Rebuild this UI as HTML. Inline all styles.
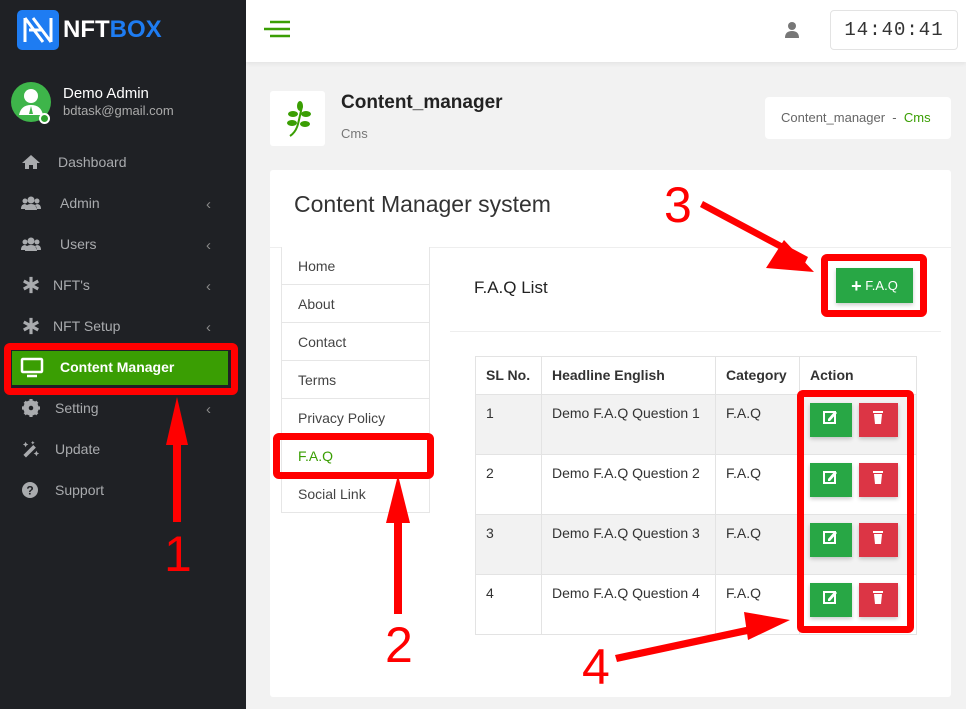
<!DOCTYPE html>
<html><head><meta charset="utf-8"><style>
*{box-sizing:border-box;margin:0;padding:0}
body{width:966px;height:709px;overflow:hidden;position:relative;background:#f2f2f2;font-family:"Liberation Sans",sans-serif;color:#333}
.a{position:absolute}
#sb{left:0;top:0;width:246px;height:709px;background:#1f2125}
.mi{position:absolute;left:0;width:246px;height:30px;color:#a9abae;font-size:14px}
.mi .ic{position:absolute;left:21px;top:7px;width:20px;height:16px}
.mi .t{position:absolute;left:58px;top:7px}
.mi .ch{position:absolute;left:206px;top:8px;font-size:15px;color:#888}
.nav{position:absolute;left:281px;width:149px;height:38px;border:1px solid #e6e6e6;border-top:none;background:#fff;font-size:14px;color:#444;padding:11px 0 0 16px}
td,th{border:1px solid #e3e3e3;text-align:left;vertical-align:top;font-size:14px;color:#333;padding:10px 10px}
th{font-weight:bold;height:38px}
td{height:60px}
.r{background:#f2f2f2}
.red{position:absolute;border:7px solid #f00;border-radius:6px}
.num{position:absolute;color:#f00;font-size:50px;font-family:"Liberation Sans",sans-serif}
.be,.bd{display:inline-block;width:42px;height:34px;margin:8px 0 0 0;vertical-align:top;box-shadow:0 2px 4px rgba(0,0,0,.2)}
.be{background:#28a745}.bd{background:#dc3545;width:39px;margin-left:7px}
</style></head><body>
<div id="sb" class="a">
 <div class="a" style="left:17px;top:10px;width:42px;height:40px;background:#1e7cf2;border-radius:5px"></div>
 <svg class="a" style="left:20px;top:14px" width="36" height="32"><path d="M5 4v24M5 4l18 24M13 4l18 24M31 4v24M9 16l14 0" stroke="#fff" stroke-width="3" fill="none"/></svg>
 <div class="a" style="left:63px;top:16px;font-size:24px;font-weight:bold;color:#fff">NFT<span style="color:#1e7cf2">BOX</span></div>
 <div class="a" style="left:11px;top:82px;width:40px;height:40px;border-radius:50%;background:#3eb54a"></div>
 <svg class="a" style="left:11px;top:82px" width="40" height="40"><circle cx="20" cy="14" r="7" fill="#fff"/><path d="M8 33q2-10 12-10q10 0 12 10z" fill="#fff"/><path d="M20 24l-2 8h4z" fill="#3eb54a"/></svg>
 <div class="a" style="left:39px;top:113px;width:11px;height:11px;border-radius:50%;background:#2ea12e;border:2px solid #fff"></div>
 <div class="a" style="left:63px;top:85px;color:#fff;font-size:15px">Demo Admin</div>
 <div class="a" style="left:63px;top:103px;color:#aaa;font-size:13px">bdtask@gmail.com</div>
 <div class="mi" style="top:147px"><svg class="ic" viewBox="0 0 20 16"><path d="M10 1L1 9h3v6h4v-4h4v4h4V9h3z" fill="#a9abae"/></svg><span class="t">Dashboard</span></div>
 <div class="mi" style="top:188px"><svg class="ic" viewBox="0 0 20 16"><circle cx="10" cy="5" r="3.5" fill="#a9abae"/><circle cx="4" cy="6" r="2.5" fill="#a9abae"/><circle cx="16" cy="6" r="2.5" fill="#a9abae"/><path d="M4 15q0-6 6-6t6 6zM0 14q0-5 4-5l2 1-2 4zM20 14q0-5-4-5l-2 1 2 4z" fill="#a9abae"/></svg><span class="t" style="left:60px">Admin</span><span class="ch">‹</span></div>
 <div class="mi" style="top:229px"><svg class="ic" viewBox="0 0 20 16"><circle cx="10" cy="5" r="3.5" fill="#a9abae"/><circle cx="4" cy="6" r="2.5" fill="#a9abae"/><circle cx="16" cy="6" r="2.5" fill="#a9abae"/><path d="M4 15q0-6 6-6t6 6zM0 14q0-5 4-5l2 1-2 4zM20 14q0-5-4-5l-2 1 2 4z" fill="#a9abae"/></svg><span class="t" style="left:60px">Users</span><span class="ch">‹</span></div>
 <div class="mi" style="top:270px"><svg class="ic" viewBox="0 0 20 20" style="height:18px;top:6px"><path d="M10 1v18M2 5.5l16 9M2 14.5l16-9" stroke="#a9abae" stroke-width="3.5"/></svg><span class="t" style="left:53px">NFT's</span><span class="ch">‹</span></div>
 <div class="mi" style="top:311px"><svg class="ic" viewBox="0 0 20 20" style="height:18px;top:6px"><path d="M10 1v18M2 5.5l16 9M2 14.5l16-9" stroke="#a9abae" stroke-width="3.5"/></svg><span class="t" style="left:53px">NFT Setup</span><span class="ch">‹</span></div>
 <div class="a" style="left:12px;top:351px;width:216px;height:34px;background:#3a9e03"></div>
 <svg class="a" style="left:20px;top:357px" width="24" height="22"><rect x="2" y="2" width="20" height="13" rx="1" stroke="#fff" stroke-width="2.5" fill="none"/><path d="M7 19h10" stroke="#fff" stroke-width="2.5"/></svg>
 <div class="a" style="left:60px;top:359px;color:#fff;font-size:14px;font-weight:bold">Content Manager</div>
 <div class="mi" style="top:393px"><svg class="ic" viewBox="0 0 20 20" style="height:18px;top:6px"><circle cx="10" cy="10" r="6.5" fill="none" stroke="#a9abae" stroke-width="4"/><path d="M10 0v20M0 10h20M3 3l14 14M17 3L3 17" stroke="#a9abae" stroke-width="3.5"/><circle cx="10" cy="10" r="2.5" fill="#1f2125"/></svg><span class="t" style="left:55px">Setting</span><span class="ch">‹</span></div>
 <div class="mi" style="top:434px"><svg class="ic" viewBox="0 0 20 20" style="height:18px;top:6px"><path d="M3 18L14 7" stroke="#a9abae" stroke-width="4"/><path d="M4 2l1 2 2 1-2 1-1 2-1-2-2-1 2-1zM16 12l1 2 2 1-2 1-1 2-1-2-2-1 2-1zM12 1l.7 1.3 1.3.7-1.3.7L12 5l-.7-1.3L10 3l1.3-.7z" fill="#a9abae"/></svg><span class="t" style="left:55px">Update</span></div>
 <div class="mi" style="top:475px"><svg class="ic" viewBox="0 0 20 16"><circle cx="9" cy="8" r="8" fill="#a9abae"/><text x="9" y="12.5" font-size="12" font-weight="bold" fill="#1f2125" text-anchor="middle" font-family="Liberation Sans">?</text></svg><span class="t" style="left:55px">Support</span></div>
</div>
<div class="a" style="left:246px;top:0;width:720px;height:62px;background:#fff;box-shadow:0 2px 4px rgba(0,0,0,.06)"></div>
<svg class="a" style="left:262px;top:20px" width="30" height="20"><path d="M8 2h20M2 9h26M8 16h20" stroke="#3a9e03" stroke-width="2.5"/></svg>
<svg class="a" style="left:784px;top:21px" width="16" height="18"><circle cx="8" cy="5" r="4" fill="#777"/><path d="M1 17q0-7 7-7t7 7z" fill="#777"/></svg>
<div class="a" style="left:830px;top:10px;width:128px;height:40px;border:1px solid #e3e3e3;border-radius:4px;font-family:'Liberation Mono',monospace;font-size:19px;color:#333;text-align:center;line-height:38px;letter-spacing:1px">14:40:41</div>
<div class="a" style="left:270px;top:91px;width:55px;height:55px;background:#fff;border-radius:3px"></div>
<svg class="a" style="left:282px;top:100px" width="32" height="38"><path d="M8 36q6-4 8-12q2-8 4-18" stroke="#3a9e03" stroke-width="2" fill="none"/><ellipse cx="18" cy="6" rx="3" ry="5" fill="#3a9e03"/><ellipse cx="11" cy="14" rx="5" ry="3" fill="#3a9e03"/><ellipse cx="24" cy="14" rx="5" ry="3" fill="#3a9e03"/><ellipse cx="10" cy="23" rx="5" ry="3" fill="#3a9e03"/><ellipse cx="23" cy="24" rx="5" ry="3" fill="#3a9e03"/></svg>
<div class="a" style="left:341px;top:92px;font-size:19px;font-weight:bold;color:#222">Content_manager</div>
<div class="a" style="left:341px;top:126px;font-size:13px;color:#777">Cms</div>
<div class="a" style="left:765px;top:97px;width:186px;height:42px;background:#fff;border-radius:4px;font-size:13px;color:#666;padding:13px 0 0 16px">Content_manager &nbsp;- &nbsp;<span style="color:#3a9e03">Cms</span></div>
<div class="a" style="left:270px;top:170px;width:681px;height:527px;background:#fff;border-radius:3px"></div>
<div class="a" style="left:294px;top:191px;font-size:23px;color:#333">Content Manager system</div>
<div class="a" style="left:270px;top:247px;width:681px;height:1px;background:#eee"></div>
<div class="nav" style="top:247px">Home</div>
<div class="nav" style="top:285px">About</div>
<div class="nav" style="top:323px">Contact</div>
<div class="nav" style="top:361px">Terms</div>
<div class="nav" style="top:399px">Privacy Policy</div>
<div class="nav" style="top:437px;color:#3a9e03">F.A.Q</div>
<div class="nav" style="top:475px">Social Link</div>
<div class="a" style="left:474px;top:278px;font-size:17px;color:#222">F.A.Q List</div>
<div class="a" style="left:450px;top:331px;width:491px;height:1px;background:#eee"></div>
<div class="a" style="left:836px;top:268px;width:77px;height:35px;background:#28a745;color:#fff;font-size:13px;text-align:center;line-height:35px;box-shadow:0 2px 4px rgba(0,0,0,.2)"><b style="font-size:18px;vertical-align:-2px">+</b> F.A.Q</div>
<table class="a" style="left:475px;top:356px;width:442px;border-collapse:collapse;background:#fff">
<tr><th style="width:66px;height:38px">SL No.</th><th style="width:174px">Headline English</th><th style="width:84px">Category</th><th>Action</th></tr>
<tr class="r"><td>1</td><td>Demo F.A.Q Question 1</td><td>F.A.Q</td><td style="padding:0 0 0 10px"><span class="be"></span><span class="bd"></span></td></tr>
<tr><td>2</td><td>Demo F.A.Q Question 2</td><td>F.A.Q</td><td style="padding:0 0 0 10px"><span class="be"></span><span class="bd"></span></td></tr>
<tr class="r"><td>3</td><td>Demo F.A.Q Question 3</td><td>F.A.Q</td><td style="padding:0 0 0 10px"><span class="be"></span><span class="bd"></span></td></tr>
<tr><td>4</td><td>Demo F.A.Q Question 4</td><td>F.A.Q</td><td style="padding:0 0 0 10px"><span class="be"></span><span class="bd"></span></td></tr>
</table>
<svg class="a" style="left:0;top:0" width="966" height="709">
<g fill="#fff">
<g id="ic"><rect x="824" y="412" width="11" height="11" fill="none" stroke="#fff" stroke-width="2"/><path d="M828 419l7-8 2 2-7 8h-2z"/><rect x="873" y="411" width="10" height="2"/><path d="M874 414h8l-1 10h-6z"/></g>
<use href="#ic" y="60"/><use href="#ic" y="120"/><use href="#ic" y="180"/>
</g>
<g fill="#f00" stroke="none">
<rect x="173" y="440" width="8" height="82"/><path d="M166 445l11-48 11 48z"/>
<rect x="394" y="520" width="8" height="94"/><path d="M386 523l12-48 12 48z"/>
<path d="M700 207l3-6 105 56-3 6z"/><path d="M814 272l-48-4 18-28z"/>
<path d="M617 662l-2-7 140-30 2 7z"/><path d="M790 620l-42 20-4-28z"/>
</g>
</svg>
<div class="red" style="left:4px;top:343px;width:234px;height:52px"></div>
<div class="red" style="left:273px;top:433px;width:161px;height:46px"></div>
<div class="red" style="left:821px;top:254px;width:106px;height:63px"></div>
<div class="red" style="left:797px;top:390px;width:117px;height:243px"></div>
<div class="num" style="left:164px;top:525px">1</div>
<div class="num" style="left:385px;top:616px">2</div>
<div class="num" style="left:664px;top:176px">3</div>
<div class="num" style="left:582px;top:638px">4</div>
</body></html>
